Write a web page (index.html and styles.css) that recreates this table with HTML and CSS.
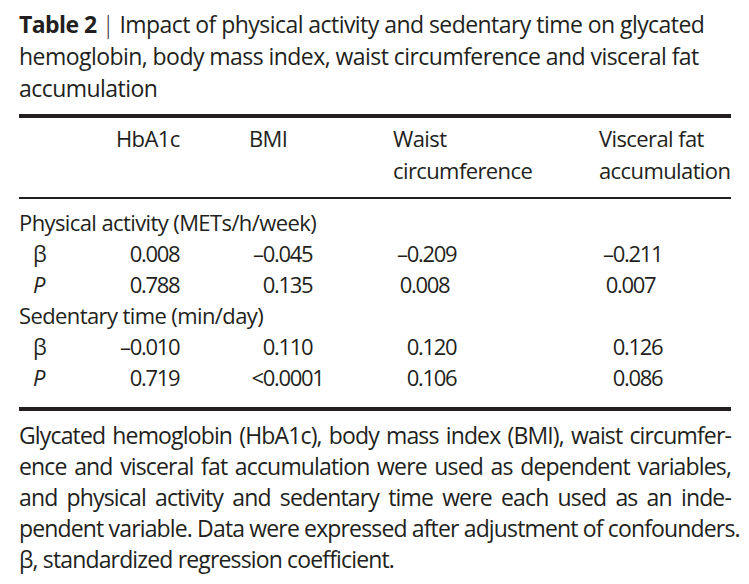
FILE: index.html
```html
<!DOCTYPE html>
<html lang="en">
<head>
<meta charset="utf-8">
<title>Table 2</title>
<link rel="stylesheet" href="styles.css">
</head>
<body>
<div class="page">
  <h1 class="caption"><b>Table 2</b> <span class="bar">|</span> Impact of physical activity and sedentary time on glycated<br>hemoglobin, body mass index, waist circumference and visceral fat<br>accumulation</h1>

  <div class="table">
    <div class="head">
      <div></div>
      <div>HbA1c</div>
      <div>BMI</div>
      <div>Waist<br>circumference</div>
      <div>Visceral fat<br>accumulation</div>
    </div>
    <div class="body">
      <div class="group">Physical activity (METs/h/week)</div>
      <div class="lbl">β</div>
      <div class="num"><span class="i">0</span>.008</div>
      <div class="num"><span class="i">–0</span>.045</div>
      <div class="num"><span class="i">–0</span>.209</div>
      <div class="num"><span class="i">–0</span>.211</div>
      <div class="lbl it">P</div>
      <div class="num"><span class="i">0</span>.788</div>
      <div class="num"><span class="i">0</span>.135</div>
      <div class="num"><span class="i tight">0</span>.008</div>
      <div class="num"><span class="i tight">0</span>.007</div>
      <div class="group">Sedentary time (min/day)</div>
      <div class="lbl">β</div>
      <div class="num"><span class="i">–0</span>.010</div>
      <div class="num"><span class="i">0</span>.110</div>
      <div class="num"><span class="i">0</span>.120</div>
      <div class="num"><span class="i">0</span>.126</div>
      <div class="lbl it">P</div>
      <div class="num"><span class="i">0</span>.719</div>
      <div class="num"><span class="i">&lt;0</span>.0001</div>
      <div class="num"><span class="i">0</span>.106</div>
      <div class="num"><span class="i">0</span>.086</div>
    </div>
  </div>

  <p class="note">
    <span class="line">Glycated hemoglobin (HbA1c), body mass index (BMI), waist circumfer-</span>
    <span class="line">ence and visceral fat accumulation were used as dependent variables,</span>
    <span class="line">and physical activity and sedentary time were each used as an inde-</span>
    <span class="line">pendent variable. Data were expressed after adjustment of confounders.</span>
    <span class="line last">β, standardized regression coefficient.</span>
  </p>
</div>
</body>
</html>
```

FILE: styles.css
```css
html, body {
  margin: 0;
  padding: 0;
  background: #ffffff;
}

body {
  font-family: "Open Sans", "Noto Sans", "Liberation Sans", sans-serif;
  font-size: 23px;
  letter-spacing: -0.55px;
  color: #231f20;
}

.page {
  width: 712px;
  padding: 8px 0 0 19px;
}

.caption {
  margin: 0;
  font-size: 23px;
  font-weight: 400;
  line-height: 32px;
  white-space: nowrap;
}

.caption b {
  font-weight: 700;
}

.bar {
  font-weight: 300;
}

.table {
  margin-top: 10px;
  font-size: 22px;
  letter-spacing: -0.6px;
  border-top: 4px solid #231f20;
  border-bottom: 4px solid #231f20;
}

.head,
.body {
  display: grid;
  grid-template-columns: 97px 133px 144px 206px 132px;
}

.head {
  line-height: 32px;
  padding: 4px 0 11px;
  border-bottom: 2px solid #231f20;
  white-space: nowrap;
}

.body {
  line-height: 31px;
  padding: 8px 0 14px;
}

.group {
  grid-column: 1 / -1;
}

.lbl {
  padding-left: 14px;
}

.it {
  font-style: italic;
}

.num {
  white-space: nowrap;
  letter-spacing: -1.3px;
}

.num .i {
  display: inline-block;
  width: 25px;
  text-align: right;
}

.num .i.tight {
  width: 18px;
}

.note {
  margin: 9px 0 0;
  line-height: 31px;
  letter-spacing: -0.85px;
}

.line {
  display: block;
  white-space: nowrap;
  text-align: justify;
  text-align-last: justify;
}

.line.last {
  text-align-last: left;
}
```
